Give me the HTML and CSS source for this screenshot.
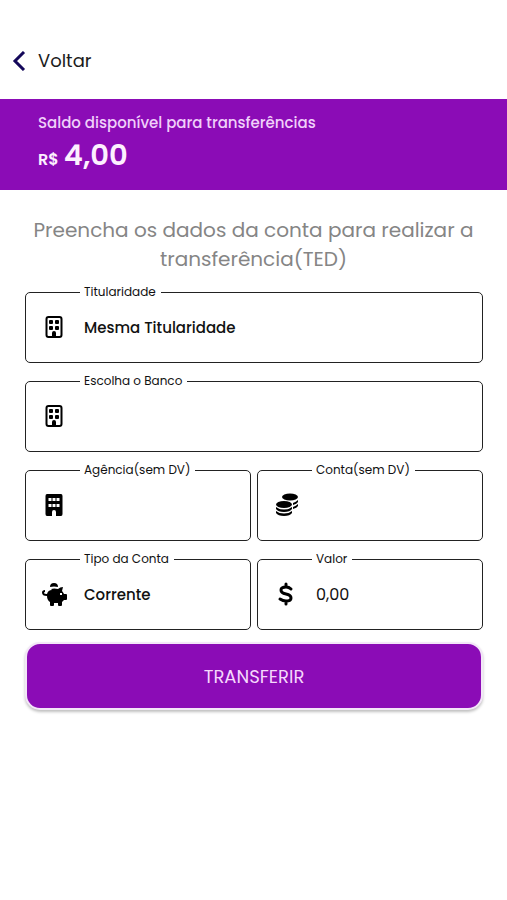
FILE: index.html
```html
<!DOCTYPE html>
<html lang="pt-br">
<head>
    <meta charset="UTF-8">
    <meta name="viewport" content="width=device-width, initial-scale=1.0">
    <title>Transferência</title>
    <link rel="stylesheet" href="styles.css">
</head>
<body>
    <header class="topo">
        <a href="#" class="voltar">
            <svg class="seta" viewBox="0 0 14 20"><path d="M12 1 L3 10 L12 19"/></svg>
            Voltar
        </a>
    </header>

    <section class="saldo">
        <p class="saldo-titulo">Saldo disponível para transferências</p>
        <p class="saldo-valor"><span class="moeda">R$</span><span>4,00</span></p>
    </section>

    <main>
        <h1>Preencha os dados da conta para realizar a transferência(TED)</h1>

        <form class="formulario">
            <fieldset class="campo largo">
                <legend><label for="titularidade">Titularidade</label></legend>
                <div class="linha">
                    <svg class="icone" viewBox="0 0 28 24">
                        <rect x="6.500" y="2" width="15" height="20" rx="2" fill="none" stroke="#000" stroke-width="2"/>
                        <rect x="9" y="5" width="4" height="4" rx="1"/>
                        <rect x="15" y="5" width="4" height="4" rx="1"/>
                        <rect x="9" y="11" width="4" height="4" rx="1"/>
                        <rect x="15" y="11" width="4" height="4" rx="1"/>
                        <path d="M12 22v-4a2 2 0 0 1 4 0v4z"/>
                    </svg>
                    <select id="titularidade">
                        <option>Mesma Titularidade</option>
                    </select>
                </div>
            </fieldset>

            <fieldset class="campo largo">
                <legend><label for="banco">Escolha o Banco</label></legend>
                <div class="linha">
                    <svg class="icone" viewBox="0 0 28 24">
                        <rect x="6.500" y="2" width="15" height="20" rx="2" fill="none" stroke="#000" stroke-width="2"/>
                        <rect x="9" y="5" width="4" height="4" rx="1"/>
                        <rect x="15" y="5" width="4" height="4" rx="1"/>
                        <rect x="9" y="11" width="4" height="4" rx="1"/>
                        <rect x="15" y="11" width="4" height="4" rx="1"/>
                        <path d="M12 22v-4a2 2 0 0 1 4 0v4z"/>
                    </svg>
                    <select id="banco">
                        <option></option>
                    </select>
                </div>
            </fieldset>

            <fieldset class="campo">
                <legend><label for="agencia">Agência(sem DV)</label></legend>
                <div class="linha">
                    <svg class="icone" viewBox="0 0 28 24">
                        <path fill-rule="evenodd" d="M7 1h14q1.500 0 1.500 2v18q0 2-1.500 2h-5v-4a2 2 0 0 0-4 0v4h-5q-1.500 0-1.500-2v-18q0-2 1.500-2zM8.500 5v3h3v-3zM12.500 5v3h3v-3zM16.500 5v3h3v-3zM8.500 11v3h3v-3zM12.500 11v3h3v-3zM16.500 11v3h3v-3z"/>
                    </svg>
                    <input type="text" id="agencia">
                </div>
            </fieldset>

            <fieldset class="campo">
                <legend><label for="conta">Conta(sem DV)</label></legend>
                <div class="linha">
                    <svg class="icone" viewBox="0 0 28 24">
                        <ellipse cx="18" cy="4" rx="8" ry="3.500"/>
                        <path d="M21 10q3-1 5-3v2q-1 2-5 3zM21 14q3-1 5-3v2q-1 2-5 3z"/>
                        <ellipse cx="12" cy="11.500" rx="8" ry="3.500"/>
                        <path d="M4 14q3 2.500 8 2.500t8-2.500v2q-2 3-8 3t-8-3zM4 18q3 2.500 8 2.500t8-2.500v2q-2 3-8 3t-8-3z"/>
                    </svg>
                    <input type="text" id="conta">
                </div>
            </fieldset>

            <fieldset class="campo">
                <legend><label for="tipo">Tipo da Conta</label></legend>
                <div class="linha">
                    <svg class="icone" viewBox="0 0 28 24">
                        <path d="M10 5a4 4 0 0 1 8 0q-4-1-8 0z"/>
                        <path fill-rule="evenodd" d="M11 7q3-1 7 0 2-2 5-2l-1 4q1 1 2 3h2q1 0 1 1v4q0 1-1 1h-2l-2 2v3q0 1-1 1h-2q-1 0-1-1v-2h-4v2q0 1-1 1h-2q-1 0-1-1v-3q-3-2-3-6-5 0-5-3.500 0-2.500 3-2.500v2q-1 0-1 1 0 1 3 1 1-4 5-4zM20 11v2h2v-2z"/>
                    </svg>
                    <select id="tipo">
                        <option>Corrente</option>
                    </select>
                </div>
            </fieldset>

            <fieldset class="campo">
                <legend><label for="valor">Valor</label></legend>
                <div class="linha">
                    <svg class="icone cifrao" viewBox="0 0 28 24">
                        <path d="M14 2v3M14 19v3M19 7q-2-2-5-2-5 0-5 3t5 4 5 4-5 3q-3 0-6-2"/>
                    </svg>
                    <input type="text" id="valor" value="0,00">
                </div>
            </fieldset>

            <button type="button" class="transferir">TRANSFERIR</button>
        </form>
    </main>
</body>
</html>
```
FILE: styles.css
```css
*{
    box-sizing: border-box;
}
body{
    margin: 0;
    background-color: white;
    font-family: Poppins, Inter, sans-serif;
    color: #111;
}
p, h1{
    margin: 0;
}
.topo{
    padding: 46px 12px 23px;
}
.voltar{
    display: flex;
    align-items: center;
    gap: 12px;
    font-size: 18px;
    line-height: 30px;
    color: #1c1c1c;
    text-decoration: none;
}
.seta{
    width: 14px;
    height: 20px;
    fill: none;
    stroke: #14085a;
    stroke-width: 3;
}
.saldo{
    background-color: #8b0cb6;
    padding: 12px 38px 10px;
    color: #fdf0ff;
}
.saldo-titulo{
    font-size: 15px;
    font-weight: 500;
    line-height: 24px;
    color: #f0d0fa;
}
.saldo-valor{
    display: flex;
    align-items: baseline;
    gap: 5px;
    font-size: 29px;
    font-weight: 600;
    line-height: 40px;
}
.moeda{
    font-size: 16px;
}
main{
    padding: 26px 24px;
}
h1{
    font-size: 20px;
    font-weight: 400;
    line-height: 29px;
    text-align: center;
    color: #858585;
}
.formulario{
    display: grid;
    grid-template-columns: 1fr 1fr;
    gap: 9px 6px;
    padding: 9px 0 0 1px;
}
.campo{
    min-width: 0;
    height: 80px;
    margin: 0;
    padding: 0;
    border: 1px solid #222;
    border-radius: 5px;
}
.largo{
    grid-column: span 2;
}
legend{
    margin-left: 54px;
    padding: 0 5px 0 4px;
    font-size: 12px;
    line-height: 18px;
}
.linha{
    display: flex;
    align-items: center;
    gap: 16px;
    height: 52px;
    padding: 0 14px;
}
.icone{
    flex: none;
    width: 28px;
    height: 24px;
}
.cifrao{
    fill: none;
    stroke: #000;
    stroke-width: 3;
    stroke-linecap: round;
}
select, input{
    appearance: none;
    flex: 1;
    min-width: 0;
    height: 30px;
    padding: 0;
    border: none;
    outline: none;
    background: none;
    font-family: inherit;
    font-size: 16px;
    color: #111;
}
select{
    font-size: 15px;
    font-weight: 500;
}
.transferir{
    grid-column: span 2;
    height: 68px;
    margin-top: 3px;
    border: 2px solid #f3e6f8;
    border-radius: 15px;
    background-color: #8b0cb6;
    box-shadow: 0 2px 3px rgba(0, 0, 0, 0.25);
    font-family: inherit;
    font-size: 18px;
    color: #f5d8fc;
}
```
